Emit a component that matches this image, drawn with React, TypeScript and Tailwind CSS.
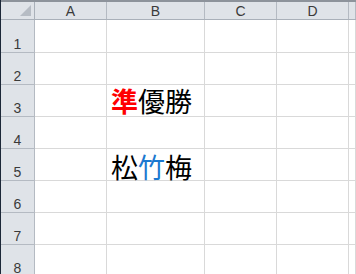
const cols = [
  { label: "A", w: "w-[72px]" },
  { label: "B", w: "w-[98px]" },
  { label: "C", w: "w-[72px]" },
  { label: "D", w: "w-[72px]" },
  { label: "", w: "flex-1" },
];

const rows = [1, 2, 3, 4, 5, 6, 7, 8];

const jp = { fontFamily: '"Noto Sans CJK JP", "Noto Sans", sans-serif' };

function CellText({ row }: { row: number }) {
  if (row === 3) {
    return (
      <span className="text-[27px] leading-none pl-1 pb-[2px] text-black">
        <span className="font-bold text-[#ff0000]">準</span>優勝
      </span>
    );
  }
  if (row === 5) {
    return (
      <span className="text-[27px] leading-none pl-1 pb-0 text-black">
        松<span className="text-[#1b78d0]">竹</span>梅
      </span>
    );
  }
  return null;
}

export default function App() {
  return (
    <div
      className="w-[356px] h-[274px] overflow-hidden bg-white border-l border-[#1c2838] flex flex-col"
      style={jp}
    >
      <div className="h-[2px] bg-[#8d939b] shrink-0" />
      {/* column headers */}
      <div className="flex h-[18px] shrink-0 bg-[#dfe3e8] border-b border-[#a9b0b9]">
        <div className="w-[34px] border-r border-[#a9b0b9] relative">
          <svg className="absolute right-[3px] bottom-[3px]" width="11" height="11" viewBox="0 0 11 11">
            <polygon points="11,0 11,11 0,11" fill="#b6bcc4" />
          </svg>
        </div>
        {cols.map((c, i) => (
          <div
            key={i}
            className={`${c.w} border-r border-[#b4bac2] flex items-center justify-center text-[14px] leading-none text-[#3a3a3a] font-['Liberation_Sans',sans-serif]`}
          >
            {c.label}
          </div>
        ))}
      </div>
      {rows.map((r) => (
        <div key={r} className={`flex shrink-0 ${r === 1 ? "h-[33px]" : "h-[32px]"}`}>
          <div className="w-[34px] bg-[#dfe3e8] border-r border-b border-[#b4bac2] flex items-end justify-center pb-[1px] text-[14px] leading-none text-[#3a3a3a] font-['Liberation_Sans',sans-serif]">
            {r}
          </div>
          {cols.map((c, i) => (
            <div
              key={i}
              className={`${c.w} border-r border-b border-[#d9d9d9] flex items-end whitespace-nowrap`}
            >
              {i === 1 && <CellText row={r} />}
            </div>
          ))}
        </div>
      ))}
    </div>
  );
}
